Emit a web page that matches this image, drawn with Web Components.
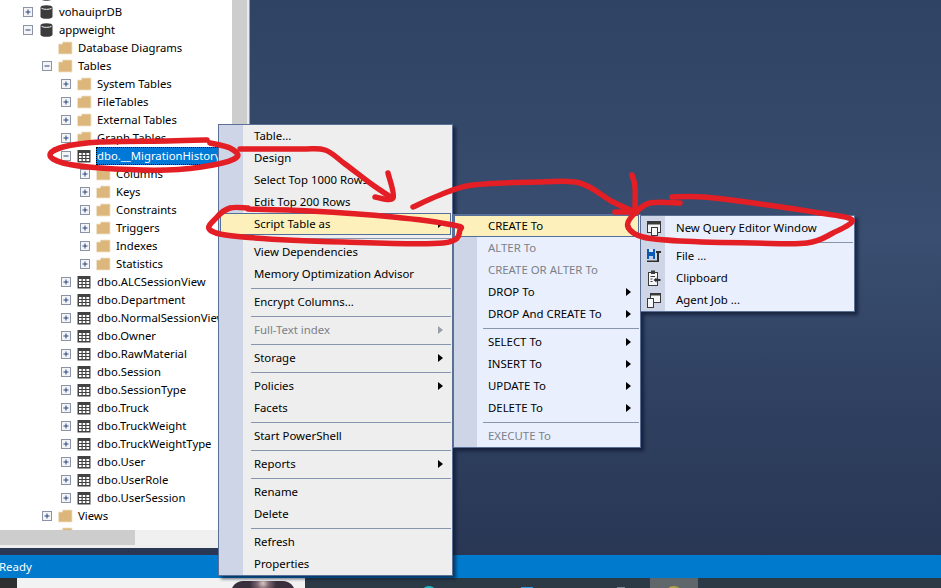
<!DOCTYPE html>
<html lang="en"><head><meta charset="utf-8"><title>SSMS</title>
<style>
html,body{margin:0;padding:0;height:100%;overflow:hidden;background:#2f4262}
body{font:11.4px/18px "Noto Sans","Liberation Sans",sans-serif;color:#000}
</style></head><body>
<app-shell>
  <object-tree slot="tree">
    <tree-row level="1" icon="db" peek></tree-row>
    <tree-row level="1" icon="db" exp="plus">vohauiprDB</tree-row>
    <tree-row level="1" icon="db" exp="minus">appweight</tree-row>
    <tree-row level="2" icon="folder">Database Diagrams</tree-row>
    <tree-row level="2" icon="folder" exp="minus">Tables</tree-row>
    <tree-row level="3" icon="folder" exp="plus">System Tables</tree-row>
    <tree-row level="3" icon="folder" exp="plus">FileTables</tree-row>
    <tree-row level="3" icon="folder" exp="plus">External Tables</tree-row>
    <tree-row level="3" icon="folder" exp="plus">Graph Tables</tree-row>
    <tree-row level="3" icon="table" exp="minus" selected>dbo.__MigrationHistory</tree-row>
    <tree-row level="4" icon="folder" exp="plus">Columns</tree-row>
    <tree-row level="4" icon="folder" exp="plus">Keys</tree-row>
    <tree-row level="4" icon="folder" exp="plus">Constraints</tree-row>
    <tree-row level="4" icon="folder" exp="plus">Triggers</tree-row>
    <tree-row level="4" icon="folder" exp="plus">Indexes</tree-row>
    <tree-row level="4" icon="folder" exp="plus">Statistics</tree-row>
    <tree-row level="3" icon="table" exp="plus">dbo.ALCSessionView</tree-row>
    <tree-row level="3" icon="table" exp="plus">dbo.Department</tree-row>
    <tree-row level="3" icon="table" exp="plus">dbo.NormalSessionView</tree-row>
    <tree-row level="3" icon="table" exp="plus">dbo.Owner</tree-row>
    <tree-row level="3" icon="table" exp="plus">dbo.RawMaterial</tree-row>
    <tree-row level="3" icon="table" exp="plus">dbo.Session</tree-row>
    <tree-row level="3" icon="table" exp="plus">dbo.SessionType</tree-row>
    <tree-row level="3" icon="table" exp="plus">dbo.Truck</tree-row>
    <tree-row level="3" icon="table" exp="plus">dbo.TruckWeight</tree-row>
    <tree-row level="3" icon="table" exp="plus">dbo.TruckWeightType</tree-row>
    <tree-row level="3" icon="table" exp="plus">dbo.User</tree-row>
    <tree-row level="3" icon="table" exp="plus">dbo.UserRole</tree-row>
    <tree-row level="3" icon="table" exp="plus">dbo.UserSession</tree-row>
    <tree-row level="2" icon="folder" exp="plus">Views</tree-row>
    <tree-row level="2" icon="folder"></tree-row>
  </object-tree>
  <status-bar slot="status">Ready</status-bar>
  <task-strip slot="strip"></task-strip>
  <ctx-menu slot="over" style="left:218px;top:124px;width:235px" tone="grey" gutter="24" sepstart="32">
    <menu-item>Table...</menu-item>
    <menu-item>Design</menu-item>
    <menu-item>Select Top 1000 Rows</menu-item>
    <menu-item>Edit Top 200 Rows</menu-item>
    <menu-item hover arrow>Script Table as</menu-item>
    <menu-sep></menu-sep>
    <menu-item>View Dependencies</menu-item>
    <menu-item>Memory Optimization Advisor</menu-item>
    <menu-sep></menu-sep>
    <menu-item>Encrypt Columns...</menu-item>
    <menu-sep></menu-sep>
    <menu-item disabled arrow>Full-Text index</menu-item>
    <menu-sep></menu-sep>
    <menu-item arrow>Storage</menu-item>
    <menu-sep></menu-sep>
    <menu-item arrow>Policies</menu-item>
    <menu-item>Facets</menu-item>
    <menu-sep></menu-sep>
    <menu-item>Start PowerShell</menu-item>
    <menu-sep></menu-sep>
    <menu-item arrow>Reports</menu-item>
    <menu-sep></menu-sep>
    <menu-item>Rename</menu-item>
    <menu-item>Delete</menu-item>
    <menu-sep></menu-sep>
    <menu-item>Refresh</menu-item>
    <menu-item>Properties</menu-item>
  </ctx-menu>
  <ctx-menu slot="over" style="left:453px;top:214px;width:188px" tone="blue" gutter="23" sepstart="29" textoff="34">
    <menu-item hover arrow>CREATE To</menu-item>
    <menu-item disabled>ALTER To</menu-item>
    <menu-item disabled>CREATE OR ALTER To</menu-item>
    <menu-item arrow>DROP To</menu-item>
    <menu-item arrow>DROP And CREATE To</menu-item>
    <menu-sep></menu-sep>
    <menu-item arrow>SELECT To</menu-item>
    <menu-item arrow>INSERT To</menu-item>
    <menu-item arrow>UPDATE To</menu-item>
    <menu-item arrow>DELETE To</menu-item>
    <menu-sep></menu-sep>
    <menu-item disabled>EXECUTE To</menu-item>
  </ctx-menu>
  <ctx-menu slot="over" style="left:640px;top:215px;width:215px;padding-top:1px" tone="blue" gutter="24" sepstart="31">
    <menu-item glyph="query">New Query Editor Window</menu-item>
    <menu-sep></menu-sep>
    <menu-item glyph="file">File ...</menu-item>
    <menu-item glyph="clip">Clipboard</menu-item>
    <menu-item glyph="job">Agent Job ...</menu-item>
  </ctx-menu>
  <ink-notes slot="over"></ink-notes>
</app-shell>
<script>
const sheet = (el, html) => { el.attachShadow({mode:'open'}).innerHTML = html; };

class AppShell extends HTMLElement{connectedCallback(){ if(this.shadowRoot)return; sheet(this,`<style>
:host{display:grid;grid-template-rows:548px 7px 23px 10px;height:588px;width:941px;position:relative;overflow:hidden;
 background:linear-gradient(#2f4364 0,#394e70 240px,#2f4060 400px,#293755 555px)}
.left{display:grid;grid-template-columns:232px 15px 3px;grid-template-rows:530px 15px 3px;width:250px;background:#f0f0f0;grid-row:1}
.tree{background:#fff;overflow:hidden;min-height:0}
.v{background:#cdcdcd}
.gap{background:#e9e9ef;grid-row:1/4;grid-column:3;border-right:1px solid #8d98ae}
.h{grid-column:1/3;background:#f0f0f0;display:flex}.h i{display:block;width:135px;background:#cdcdcd}
.pad{grid-column:1/3;background:#eeeeee}
.nav{grid-row:2}
.status{grid-row:3;min-width:0}.strip{grid-row:4}
.over{position:absolute;inset:0;display:block}
</style>
<div class="left"><div class="tree"><slot name="tree"></slot></div><div class="v"></div><div class="gap"></div><div class="h"><i></i></div><div class="pad"></div></div>
<div class="nav"></div><div class="status"><slot name="status"></slot></div><div class="strip"><slot name="strip"></slot></div>
<div class="over"><slot name="over"></slot></div>`);}}

class ObjectTree extends HTMLElement{connectedCallback(){ if(this.shadowRoot)return; sheet(this,`<style>
:host{display:flex;flex-direction:column;height:530px;overflow:hidden;background:#fff}
</style><slot></slot>`);}}

const ICONS={
db:`<svg width="13" height="14" viewBox="0 0 13 14"><path d="M.5 2.5C.5 1 3 .2 6.5.2s6 .8 6 2.3v9c0 1.5-2.500 2.300-6 2.300s-6-.8-6-2.300z" fill="#3b3b3b"/><path d="M1.500 3.300C3 4.700 10 4.700 11.500 3.300" fill="none" stroke="#f2f2f2" stroke-width="1"/></svg>`,
folder:`<svg width="15" height="14" viewBox="0 0 15 14"><path d="M.5 3H4.500V1H14V13H.5z" fill="#dcb67a" stroke="#efe3cc" stroke-width=".8"/></svg>`,
table:`<svg width="14" height="14" viewBox="0 0 14 14"><rect x=".5" y="1" width="13" height="12.500" fill="#424242"/><g fill="#fff"><rect x="2" y="4" width="2.500" height="2"/><rect x="5.700" y="4" width="2.500" height="2"/><rect x="9.400" y="4" width="2.800" height="2"/><rect x="2" y="7" width="2.500" height="2"/><rect x="5.700" y="7" width="2.500" height="2"/><rect x="9.400" y="7" width="2.800" height="2"/><rect x="2" y="10" width="2.500" height="2"/><rect x="5.700" y="10" width="2.500" height="2"/><rect x="9.400" y="10" width="2.800" height="2"/></g></svg>`
};
class TreeRow extends HTMLElement{connectedCallback(){ if(this.shadowRoot)return;
 const l=+this.getAttribute('level')||1, exp=this.getAttribute('exp'), ic=this.getAttribute('icon');
 const sign=exp==='plus'?'<path d="M2.500 5H7.500M5 2.500V7.500" stroke="#26477d" fill="none"/>':exp==='minus'?'<path d="M2.500 5H7.500" stroke="#26477d" fill="none"/>':'';
 const box=exp?`<svg width="10" height="10" viewBox="0 0 10 10"><rect x=".5" y=".5" width="9" height="9" fill="#f4f4f6" stroke="#8a94a6"/>${sign}</svg>`:'';
 sheet(this,`<style>
:host{display:flex;align-items:center;flex:none;height:18px;padding-left:${23+19*(l-1)}px;white-space:nowrap;
 font:11.3px/18px "Noto Sans","Liberation Sans",sans-serif;color:#000;${this.hasAttribute('peek')?'margin-top:-15px;':''}}
.e{width:17px;flex:none;display:flex}.i{width:19px;flex:none;display:flex;margin-left:${ic==='db'?0:-1}px}
.t{padding:0 1px;margin-left:${ic==='db'?-1:0}px;height:18px;box-sizing:border-box;flex:none}
:host([selected]) .t{background:#0078d7;color:#fff;outline:1px dotted #000;outline-offset:-1px;}
</style><span class="e">${box}</span><span class="i">${ICONS[ic]||''}</span><span class="t"><slot></slot></span>`);}}

class CtxMenu extends HTMLElement{connectedCallback(){ if(this.shadowRoot)return;
 const g=this.getAttribute('gutter')||24, blue=this.getAttribute('tone')==='blue';
 this.style.setProperty('--sep-start',(this.getAttribute('sepstart')||32)+'px');
 this.style.setProperty('--hover-ml',blue?'0px':'1px');
 this.style.setProperty('--text-off',(this.getAttribute('textoff')||35)+'px');
 sheet(this,`<style>
:host{position:absolute;display:flex;flex-direction:column;box-sizing:border-box;border:1px solid #5a7096;
 background:linear-gradient(to right,#cdd5e6 ${g}px,${blue?'#e9effd':'#eeeeee'} ${g}px);
 box-shadow:3px 3px 3px rgba(8,16,40,.6);
 font:11.4px/22px "Noto Sans","Liberation Sans",sans-serif;color:#000}
</style><slot></slot>`);}}

const GLYPHS={
query:`<svg width="18" height="18" viewBox="0 0 18 18" fill="none"><rect x="3.500" y="2.500" width="13" height="11" fill="#f5f6f8" stroke="#3a3a3a"/><rect x="3.500" y="2.500" width="13" height="3" fill="#3a3a3a"/><rect x="7.500" y="8.500" width="6" height="8" fill="#f5f6f8" stroke="#3a3a3a"/></svg>`,
file:`<svg width="18" height="18" viewBox="0 0 18 18"><rect x="3" y="2" width="8" height="10" fill="#0b58b5"/><rect x="5" y="2" width="4" height="3" fill="#d8e4f5"/><rect x="5" y="9" width="4" height="3" fill="#bcd0ec"/><path d="M12 4H17V6H15V15H3V13.500H13V6H12z" fill="#2e2e2e"/></svg>`,
clip:`<svg width="18" height="18" viewBox="0 0 18 18"><rect x="4.500" y="3.500" width="9" height="13" fill="#f5f6f8" stroke="#3a3a3a"/><rect x="7" y="1.500" width="4" height="3.500" fill="#3a3a3a"/><path d="M6.500 7.500H11M6.500 10H8.500M6.500 12.500H8.500" stroke="#3a3a3a"/><path d="M9.500 11L12.500 8.500V10H16.500V12H12.500V13.500z" fill="#2e2e2e"/></svg>`,
job:`<svg width="18" height="18" viewBox="0 0 18 18"><rect x="6.500" y="2.500" width="10" height="9" fill="#f5f6f8" stroke="#3a3a3a"/><rect x="6.500" y="2.500" width="10" height="2" fill="#3a3a3a"/><rect x="3.500" y="7.500" width="6" height="9" fill="#f5f6f8" stroke="#3a3a3a"/></svg>`
};
class MenuItem extends HTMLElement{connectedCallback(){ if(this.shadowRoot)return;
 const gl=this.getAttribute('glyph');
 sheet(this,`<style>
:host{display:flex;align-items:center;height:22px;flex:none;position:relative;box-sizing:border-box;white-space:nowrap;padding-left:var(--text-off,35px);}
:host([hover]){margin-left:var(--hover-ml,1px);margin-right:1px;padding-left:calc(var(--text-off,35px) - var(--hover-ml,1px) - 1px);border:1px solid #54709a;background:#fdf0bb}
:host([disabled]){color:#7b7f88}
.g{position:absolute;left:3px;top:2px;width:18px;height:18px;display:block}
.t{flex:1;min-width:0}
.a{width:0;height:0;border-style:solid;border-width:4px 0 4px 5px;border-color:transparent transparent transparent currentColor;margin-right:9px;flex:none}
:host([hover]) .a{margin-right:7px}
:host([disabled]) .a{border-left-color:#9a9ea6}
</style>${gl?`<span class="g">${GLYPHS[gl]}</span>`:''}<span class="t"><slot></slot></span>${this.hasAttribute('arrow')?'<span class="a"></span>':''}`);}}

class MenuSep extends HTMLElement{connectedCallback(){ if(this.shadowRoot)return; sheet(this,`<style>
:host{display:flex;align-items:center;height:6px;flex:none;padding-left:var(--sep-start,32px);padding-right:1px}
i{display:block;flex:1;height:1px;background:#8896ad}
</style><i></i>`);}}

class StatusBar extends HTMLElement{connectedCallback(){ if(this.shadowRoot)return; sheet(this,`<style>
:host{display:flex;align-items:center;height:23px;background:#007acc;color:#fff;padding-left:0;margin-left:-1px;
 font:11.4px/23px "Noto Sans","Liberation Sans",sans-serif}
</style><slot></slot>`);}}

class TaskStrip extends HTMLElement{connectedCallback(){ if(this.shadowRoot)return; sheet(this,`<style>
:host{display:flex;height:10px;background:#2b3a44;overflow:hidden;align-items:flex-start}
.a{width:17px;height:10px;background:#2f2f2f;flex:none}
.w{width:288px;height:10px;background:#f2f2f2;flex:none;display:flex;justify-content:flex-start}
.blob{display:block;width:64px;height:12px;margin:3px 0 0 214px;border-radius:32px 32px 0 0;background:radial-gradient(circle at 50% 20%,#d8c7c0 0,#7a6470 18%,#3a2f3c 40%)}
.sp{display:block;flex:none}
.t{width:16px;height:16px;border-radius:50%;background:#1fb6c9;margin:8px 0 0 116px}
.b{width:12px;height:4px;background:#2c9ee6;margin:9px 0 0 84px}
.c{width:8px;height:3px;background:#7b8794;margin:9px 0 0 84px}
.hi{width:48px;height:10px;background:#5f676b;margin-left:25px;display:flex;justify-content:center}
.hi i{display:block;width:18px;height:10px;margin-top:8px;border-radius:9px 9px 0 0;background:linear-gradient(to right,#d9a441,#7fa04a)}
</style><span class="a"></span><span class="w"><span class="blob"></span></span><span class="sp t"></span><span class="sp b"></span><span class="sp c"></span><span class="sp hi"><i></i></span>`);}}

const smooth=(p)=>{const n=p.length,g=i=>p[Math.max(0,Math.min(n-1,i))];
 let d=`M${p[0][0]} ${p[0][1]}`;for(let i=0;i<n-1;i++){const a=g(i-1),b=g(i),c=g(i+1),e=g(i+2);
 d+=`C${(b[0]+(c[0]-a[0])/6).toFixed(1)} ${(b[1]+(c[1]-a[1])/6).toFixed(1)} ${(c[0]-(e[0]-b[0])/6).toFixed(1)} ${(c[1]-(e[1]-b[1])/6).toFixed(1)} ${c[0]} ${c[1]}`;}return d;};
const STROKES=[
[[207,140],[167,141],[100,142],[63,147],[50,155],[63,163],[100,168],[167,170],[213,165],[237,157],[230,148],[210,143]],
[[240,149],[300,149],[325,150],[345,164],[370,183],[392,198]],
[[375,197],[393,198],[388,173]],
[[248,208],[230,208],[217,217],[210,230],[243,237],[343,242],[443,243],[460,230],[453,225],[393,217],[310,211],[248,209]],
[[413,207],[440,195],[473,185],[540,182],[580,183],[613,202],[635,212]],
[[615,212],[637,212]],
[[632,175],[635,187],[635,213]],
[[680,203],[650,203],[633,215],[628,227],[643,237],[680,241],[753,243],[807,243],[833,233],[852,220],[820,213],[753,203],[703,197],[672,197]]
];
class InkNotes extends HTMLElement{connectedCallback(){ if(this.shadowRoot)return; sheet(this,`<style>
:host{position:absolute;inset:0;display:block;pointer-events:none}svg{display:block}
</style><svg width="941" height="588" viewBox="0 0 941 588" fill="none" stroke="#e31e24" stroke-width="5.500" stroke-linecap="round" stroke-linejoin="round">${STROKES.map(s=>`<path d="${smooth(s)}"/>`).join('')}</svg>`);}}

customElements.define('app-shell',AppShell);
customElements.define('object-tree',ObjectTree);
customElements.define('tree-row',TreeRow);
customElements.define('ctx-menu',CtxMenu);
customElements.define('menu-item',MenuItem);
customElements.define('menu-sep',MenuSep);
customElements.define('status-bar',StatusBar);
customElements.define('task-strip',TaskStrip);
customElements.define('ink-notes',InkNotes);
</script>
</body></html>
